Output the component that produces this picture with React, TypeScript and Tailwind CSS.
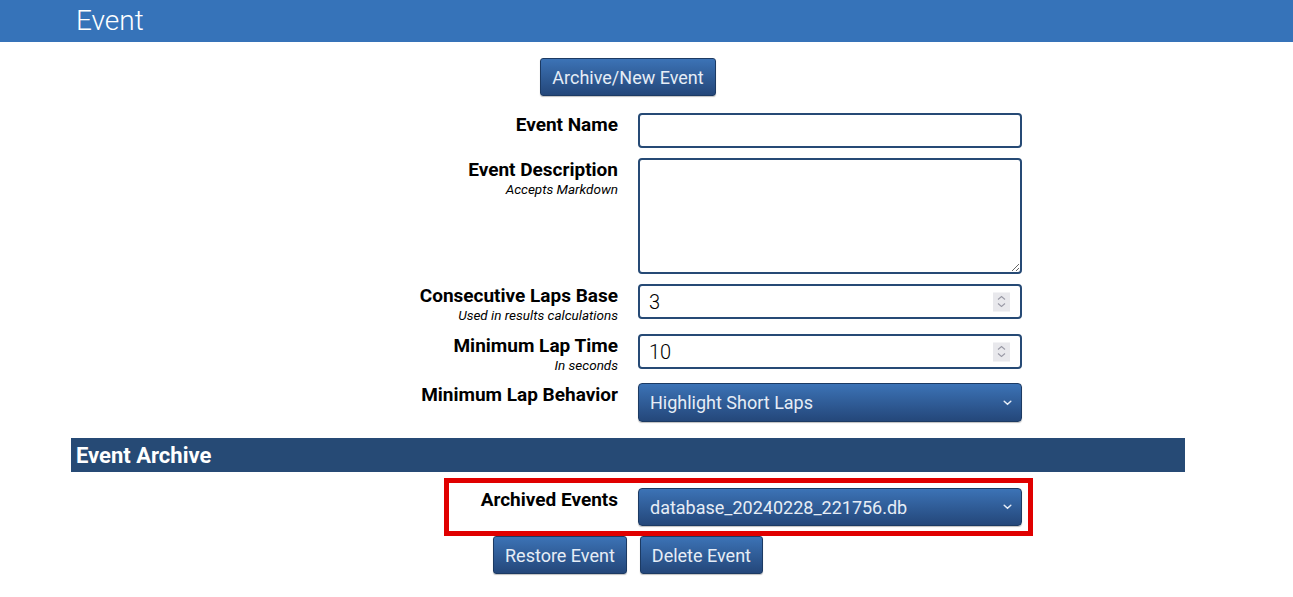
import React from 'react';

const Chevron = () => (
    <svg width="9" height="6" viewBox="0 0 9 6" className="absolute right-[9px] top-1/2 -translate-y-1/2">
        <path d="M1.2 1.3 L4.5 4.3 L7.8 1.3" fill="none" stroke="#e8eef7" strokeWidth="1.5" strokeLinecap="round" />
    </svg>
);

const Spinner = () => (
    <div className="absolute right-[10px] top-1/2 -translate-y-1/2 w-[17px] h-[19px] bg-[#e8e8ec] flex flex-col items-center justify-center gap-[2px]">
        <svg width="9" height="5" viewBox="0 0 9 5"><path d="M1 4 L4.5 1 L8 4" fill="none" stroke="#9a9aa6" strokeWidth="1.1" /></svg>
        <svg width="9" height="5" viewBox="0 0 9 5"><path d="M1 1 L4.5 4 L8 1" fill="none" stroke="#9a9aa6" strokeWidth="1.1" /></svg>
    </div>
);

const Button = ({ children }: { children: React.ReactNode }) => (
    <button className="h-[38px] px-[11px] rounded-[3px] border border-[#1c3a63] bg-linear-to-b from-[#3c73b6] to-[#24477a] text-[18px] text-[#e6edf6] shadow-[0_1px_1px_rgba(0,0,0,0.25)]">
        {children}
    </button>
);

const Label = ({ title, hint }: { title: string; hint?: string }) => (
    <div className="w-[547px] text-right pt-[1px]">
        <div className="text-[19px] font-bold leading-[22px] text-black">{title}</div>
        {hint && <div className="text-[13.5px] italic leading-[16px] text-black">{hint}</div>}
    </div>
);

const fieldBox = "w-[384px] rounded-[4px] border-2 border-[#264a75] bg-white";
const selectBox = "relative w-[384px] rounded-[4px] border border-[#1c3a63] bg-linear-to-b from-[#3c73b6] to-[#24477a] flex items-center px-[11px] shadow-[0_1px_1px_rgba(0,0,0,0.25)]";

export default function App() {
    return (
        <div className="min-h-screen bg-white font-['Roboto',sans-serif]">
            {/* Page header */}
            <header className="h-[42px] bg-[#3673b9]">
                <h1 className="ml-[76px] text-[28px] font-light leading-[42px] text-white">Event</h1>
            </header>

            <main className="ml-[71px] w-[1114px]">
                <div className="flex justify-center pt-[16px]">
                    <Button>Archive/New Event</Button>
                </div>

                {/* Event Name */}
                <div className="flex h-[35px] mt-[17px]">
                    <Label title="Event Name" />
                    <input type="text" className={`${fieldBox} ml-[20px] h-[35px] px-[9px] outline-none`} />
                </div>

                {/* Event Description */}
                <div className="flex h-[116px] mt-[10px]">
                    <Label title="Event Description" hint="Accepts Markdown" />
                    <textarea className={`${fieldBox} ml-[20px] h-[116px] px-[9px] outline-none block`} />
                </div>

                {/* Consecutive Laps Base */}
                <div className="flex h-[35px] mt-[10px]">
                    <Label title="Consecutive Laps Base" hint="Used in results calculations" />
                    <div className={`${fieldBox} relative ml-[20px] h-[35px] flex items-center px-[9px]`}>
                        <span className="text-[20px] font-light text-black">3</span>
                        <Spinner />
                    </div>
                </div>

                {/* Minimum Lap Time */}
                <div className="flex h-[35px] mt-[15px]">
                    <Label title="Minimum Lap Time" hint="In seconds" />
                    <div className={`${fieldBox} relative ml-[20px] h-[35px] flex items-center px-[9px]`}>
                        <span className="text-[20px] font-light text-black">10</span>
                        <Spinner />
                    </div>
                </div>

                {/* Minimum Lap Behavior */}
                <div className="flex h-[39px] mt-[14px]">
                    <Label title="Minimum Lap Behavior" />
                    <div className={`${selectBox} ml-[20px] h-[39px]`}>
                        <span className="text-[18px] text-[#e6edf6]">Highlight Short Laps</span>
                        <Chevron />
                    </div>
                </div>

                {/* Event Archive section */}
                <div className="mt-[16px] h-[34px] bg-[#264a75] px-[5px] flex items-center">
                    <h2 className="text-[22px] font-bold text-white">Event Archive</h2>
                </div>

                <div className="mt-[6px] ml-[373px] w-[589px] h-[58px] border-[5px] border-[#e00000] flex">
                    <div className="w-[169px] text-right pt-[6px]">
                        <div className="text-[19px] font-bold leading-[22px] text-black">Archived Events</div>
                    </div>
                    <div className={`${selectBox} ml-[20px] mt-[5px] h-[38px]`}>
                        <span className="text-[18px] text-[#e6edf6]">database_20240228_221756.db</span>
                        <Chevron />
                    </div>
                </div>

                <div className="flex justify-center gap-[13px]">
                    <Button>Restore Event</Button>
                    <Button>Delete Event</Button>
                </div>
            </main>
        </div>
    );
}
